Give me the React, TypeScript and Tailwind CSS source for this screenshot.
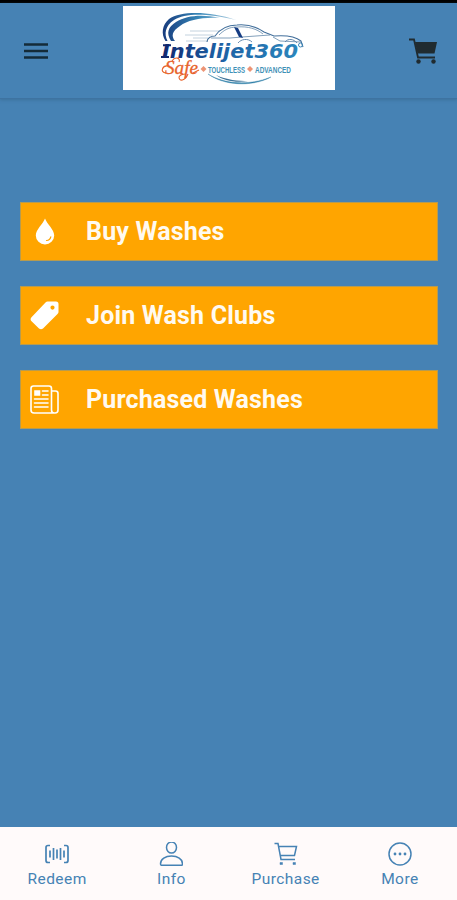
import React from 'react';

function Logo() {
  return (
    <svg viewBox="123 6 212 84" className="h-[84px] w-[212px] bg-white" fill="none">
      <defs>
        <linearGradient id="word" gradientUnits="userSpaceOnUse" x1="162" y1="0" x2="300" y2="0">
          <stop offset="0" stopColor="#10286f" />
          <stop offset="0.4" stopColor="#1c5fa3" />
          <stop offset="1" stopColor="#2b87bd" />
        </linearGradient>
        <linearGradient id="arc" gradientUnits="userSpaceOnUse" x1="162" y1="0" x2="236" y2="0">
          <stop offset="0" stopColor="#173a7c" />
          <stop offset="0.5" stopColor="#3787b8" />
          <stop offset="1" stopColor="#b7d3e4" />
        </linearGradient>
      </defs>
      <path d="M165.500 41C161 34 162 25 169 19C181 11 209 11 236 20C207 13 185 13 174 20C165 26 164 34 167.500 41Z" fill="url(#arc)" />
      <path d="M171 41C166 33 168 27 176 22C187 15 203 14 220 18C202 17 188 20 180 26C172 31 171 36 175 41Z" fill="url(#arc)" />
      <g stroke="#b4c6d5" strokeWidth="0.8">
        <path d="M190 31H220M185 35H213M193 38H208M186 41H207" />
      </g>
      <path d="M207 42C207 38 211 36 215 36C220 29 227 25 237 25C248 24 257 27 264 32L274 36C286 35 296 37 301 41L303 47" stroke="#426f9b" strokeWidth="1.100" />
      <path d="M219 35C224 30 229 27 237 27C248 26 257 29 263 34M211 38H230L242 37L270 35M273 37L280 41L301 42" stroke="#6288aa" strokeWidth="0.800" />
      <path d="M234 27L238 28L243 38L239 37Z" fill="#153c83" />
      <path d="M238 43C241 39 248 38 252 42M285 42C288 38 294 39 297 43" stroke="#587fa6" strokeWidth="0.900" />
      <text x="162" y="58" textLength="136" lengthAdjust="spacingAndGlyphs" fill="url(#word)" className="font-['DejaVu_Sans',sans-serif] text-[19px] font-bold italic">Intelijet360</text>
      <path d="M163 45.200H171M161 57H169" stroke="#10286f" strokeWidth="2" />
      <circle cx="300.500" cy="45" r="2" stroke="#3d88b9" strokeWidth="1" />
      <text x="165" y="73.500" textLength="33" lengthAdjust="spacingAndGlyphs" fill="#e8632b" stroke="#e8632b" strokeWidth="0.300" className="font-['Liberation_Serif',serif] text-[19px] italic">Safe</text>
      <path d="M166 73C159 72 163 65 168 66M172 61C175 56 181 58 179 62M193 73L199 70M188 74C185 81 179 82 179 77C180 75 183 74 186 74" stroke="#e8632b" strokeWidth="1.100" />
      <text x="208" y="72.500" textLength="37" lengthAdjust="spacingAndGlyphs" fill="#3f91b7" className="font-['Liberation_Sans',sans-serif] text-[9.500px] font-bold">TOUCHLESS</text>
      <text x="255" y="72.500" textLength="36" lengthAdjust="spacingAndGlyphs" fill="#3f91b7" className="font-['Liberation_Sans',sans-serif] text-[9.500px] font-bold">ADVANCED</text>
      <g fill="#ed9475">
        <path d="M203.500 66L206.500 69L203.500 72L200.500 69Z" />
        <path d="M250 66L253 69L250 72L247 69Z" />
      </g>
      <path d="M208 74C224 84 249 86 271 77C253 87 224 86 208 74Z" fill="#3180a9" stroke="#3180a9" strokeWidth="0.400" />
      <path d="M216 75C226 80 239 81 248 81C237 83 223 81 216 75Z" fill="#3d7398" />
    </svg>
  );
}

function Drop() {
  return (
    <svg viewBox="0 0 20 27" className="h-[27px] w-5">
      <path d="M10 0.500C8 6 0.800 11.500 0.800 17.500A9.200 9 0 0 0 19.200 17.500C19.200 11.500 12 6 10 0.500Z" fill="white" />
      <path d="M11.500 22.500C13.800 22.300 15.300 21 15.800 18.800" fill="none" stroke="#ffa500" strokeWidth="1.200" strokeLinecap="round" />
    </svg>
  );
}

function Tag() {
  return (
    <svg viewBox="0 0 29 29" className="size-[29px]">
      <path fillRule="evenodd" d="M17.500 0.500H26Q28.500 0.500 28.500 3V11Q28.500 12 27.500 13L13 27.500Q11 29 9 27.500L1.300 20Q-.2 18 1.500 16.200L15.500 1.500Q16.500 .5 17.500 .5ZM22.500 4.500A2.100 2.100 0 1 0 22.500 8.700A2.100 2.100 0 0 0 22.500 4.500Z" fill="white" />
    </svg>
  );
}

function News() {
  return (
    <svg viewBox="0 0 29 29" className="size-[29px]" fill="none" stroke="white" strokeWidth="1.600">
      <path d="M21.500 25V3.500Q21.500 1 19 1H3.500Q1 1 1 3.500V25Q1 28 4 28H25Q28 28 28 25V8.500Q28 6 25.500 6H21.500M21.500 25Q21.500 28 24.500 28" />
      <path d="M12.500 6H18M12.500 10H18M4.500 14H18M4.500 18H18M4.500 22H18" strokeLinecap="round" />
      <path d="M5 6H9.500V10H5Z" fill="white" />
    </svg>
  );
}

const actions = [
  { label: 'Buy Washes', icon: <Drop /> },
  { label: 'Join Wash Clubs', icon: <Tag /> },
  { label: 'Purchased Washes', icon: <News /> },
];

const tabs = [
  {
    label: 'Redeem',
    icon: <path d="M5 3.500H3Q1 3.500 1 5.500V18.500Q1 20.500 3 20.500H5M19 3.500H21Q23 3.500 23 5.500V18.500Q23 20.500 21 20.500H19M5 8.500V15.500M8.500 6V18M12 7.500V16.500M15.500 6V18M19 8.500V15.500" strokeWidth="1.700" />,
  },
  {
    label: 'Info',
    icon: <><ellipse cx="12.500" cy="5.500" rx="5" ry="5.500" /><path d="M1.500 22C1.500 17 6.500 14 12.500 14S23.500 17 23.500 22Q23.500 23.300 22.300 23.300H2.700Q1.500 23.300 1.500 22Z" /></>,
  },
  {
    label: 'Purchase',
    icon: <><path d="M0.500 1.500H4L7 17.500H21M4.500 4.500H22.500L20.500 13.500H6.300" /><path d="M6 20.500H8.500V22.500H6ZM19 20.500H21.500V22.500H19Z" fill="currentColor" strokeWidth="0.500" /></>,
  },
  {
    label: 'More',
    icon: <><circle cx="12" cy="12" r="11" /><g fill="currentColor" stroke="none"><circle cx="7" cy="12" r="1.400" /><circle cx="12" cy="12" r="1.400" /><circle cx="17" cy="12" r="1.400" /></g></>,
  },
];

export default function App() {
  return (
    <main className="flex h-[900px] w-[457px] flex-col overflow-hidden bg-[#4682b4] font-['Roboto',sans-serif]">
      <div className="h-[3px] shrink-0 bg-black" />
      <header className="flex h-24 shrink-0 items-start justify-between border-b border-[#3e73a1] pt-[3px] pr-[20px] pl-6 shadow-[0_1px_3px_#315f8480]">
        <button aria-label="Menu" className="mt-[37px]">
          <svg viewBox="0 0 24 16" className="h-4 w-6" stroke="#142b38" strokeWidth="2.600">
            <path d="M0 1.500H24M0 8H24M0 14.500H24" />
          </svg>
        </button>
        <Logo />
        <button aria-label="Shopping cart" className="mt-8 text-[#202b30]">
          <svg viewBox="0 0 28 26" className="h-[26px] w-7" fill="none">
            <path d="M0 1.500H5L9 19.500H26" stroke="currentColor" strokeWidth="1.800" />
            <path d="M6 4H28L25.500 15.500H8.500Z" fill="currentColor" />
            <circle cx="9.500" cy="23.500" r="2.200" fill="currentColor" />
            <circle cx="24.500" cy="23.500" r="2.200" fill="currentColor" />
          </svg>
        </button>
      </header>
      <section className="flex flex-1 flex-col gap-[25px] pt-[103px] pr-[19px] pl-5">
        {actions.map(({ label, icon }) => (
          <button key={label} className="flex h-[59px] w-full items-center border border-[#b69b50] bg-[#ffa500] text-left">
            <span className="ml-2 flex w-[31px] justify-center">{icon}</span>
            <span className="ml-[26px] text-[25px] font-bold leading-none tracking-[0.18px] whitespace-nowrap text-[#fffaf0]">{label}</span>
          </button>
        ))}
      </section>
      <nav className="grid h-[73px] shrink-0 grid-cols-4 bg-[#fffafa] text-[#4682b4]">
        {tabs.map(({ label, icon }) => (
          <button key={label} className="flex flex-col items-center pt-[15px]">
            <svg viewBox="0 0 24 24" className="size-6" fill="none" stroke="currentColor" strokeWidth="1.500">{icon}</svg>
            <span className="mt-[5px] text-[15.5px] leading-4 tracking-[0.45px]">{label}</span>
          </button>
        ))}
      </nav>
    </main>
  );
}
